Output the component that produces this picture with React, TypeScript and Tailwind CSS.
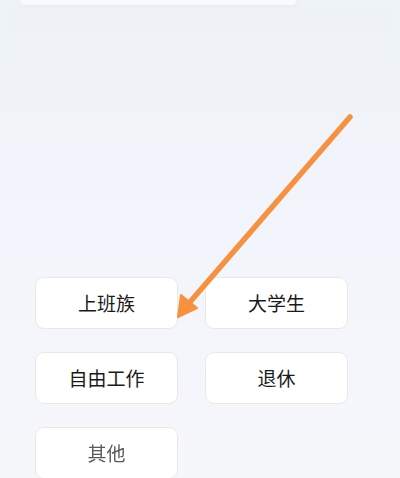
const options = ['上班族', '大学生', '自由工作', '退休', '其他']

export default function App() {
  return (
    <div
      className="relative h-[478px] w-[400px] overflow-hidden bg-gradient-to-b from-[#eef3f8] via-[#f2f5fb] to-[#f6f7fb]"
      style={{ fontFamily: '"Noto Sans CJK SC", "Noto Sans", sans-serif' }}
    >
      {/* top card edge */}
      <div className="mx-[20px] h-[5px] w-[276px] rounded-b-[10px] bg-white/60 shadow-[0_2px_5px_rgba(205,215,228,0.25)]" />
      <div className="mx-[6px] mt-[3px] h-[72px] rounded-b-lg bg-[#eef2f7]/60" />

      <div className="mt-[197px] grid grid-cols-[143px_143px] gap-x-[27px] gap-y-[23px] px-[35px]">
        {options.map((label, i) => (
          <button
            key={label}
            className={
              i === 4
                ? 'h-[52px] rounded-[9px] border border-[#ebe8e4] bg-white text-[19px] text-[#595959] blur-[0.4px]'
                : 'h-[52px] rounded-[9px] border border-[#ebe8e4] bg-white text-[19px] text-[#1a1a1a]'
            }
          >
            {label}
          </button>
        ))}
      </div>

      {/* pointer arrow */}
      <svg className="absolute left-0 top-0" width="400" height="478" viewBox="0 0 400 478">
        <line x1="350" y1="117" x2="190" y2="302" stroke="#f7913f" strokeWidth="5.5" strokeLinecap="round" />
        <polygon points="178,317 181,295 197,308" fill="#f7913f" stroke="#f7913f" strokeWidth="2" strokeLinejoin="round" />
      </svg>
    </div>
  )
}
